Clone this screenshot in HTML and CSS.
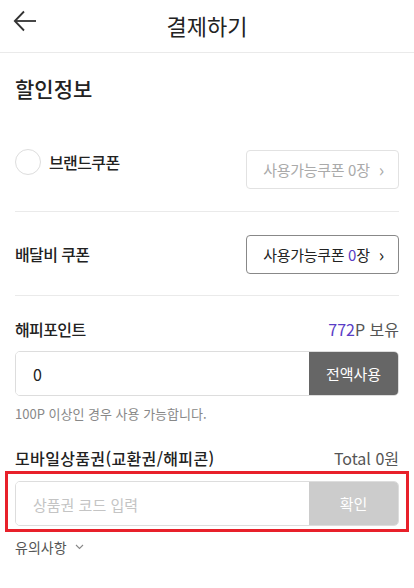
FILE: index.html
```html
<!DOCTYPE html>
<html lang="ko">
<head>
  <meta charset="UTF-8" />
  <meta name="viewport" content="width=device-width, initial-scale=1" />
  <title>결제하기</title>
  <link rel="stylesheet" href="styles.css">
</head>
<body>

<header class="topbar">
  <span class="back-btn">
    <svg width="24" height="22" viewBox="0 0 24 22" fill="none" stroke="#333" stroke-width="1.8">
      <path d="M23 11H2" />
      <path d="M11 1.5L1.8 11l9.2 9.5" />
    </svg>
  </span>
  <h1 class="title">결제하기</h1>
</header>

<main class="content">
  <h2 class="section-title">할인정보</h2>

  <div class="coupon-row brand">
    <label class="check">
      <span class="circle"></span>
      <span class="row-label">브랜드쿠폰</span>
    </label>
    <button class="coupon-btn disabled"><span>사용가능쿠폰 0장</span><span class="chev">&#8250;</span></button>
  </div>

  <div class="coupon-row delivery">
    <span class="row-label">배달비 쿠폰</span>
    <button class="coupon-btn"><span>사용가능쿠폰 <em class="hl">0</em>장</span><span class="chev">&#8250;</span></button>
  </div>

  <div class="point-block">
    <div class="field-head">
      <span class="row-label">해피포인트</span>
      <span class="meta"><em class="hl">772</em>P 보유</span>
    </div>
    <div class="input-group">
      <input class="field" type="text" value="0" />
      <button class="side-btn dark">전액사용</button>
    </div>
    <p class="note">100P 이상인 경우 사용 가능합니다.</p>
  </div>

  <div class="voucher-block">
    <div class="field-head">
      <span class="row-label wide">모바일상품권(교환권/해피콘)</span>
      <span class="meta">Total 0원</span>
    </div>
    <div class="highlight">
      <div class="input-group">
        <input class="field" type="text" placeholder="상품권 코드 입력" />
        <button class="side-btn light">확인</button>
      </div>
    </div>
    <div class="notice">유의사항
      <svg width="9" height="6" viewBox="0 0 9 6" fill="none" stroke="#888" stroke-width="1.1">
        <path d="M1 1l3.5 3.5L8 1" />
      </svg>
    </div>
  </div>
</main>

</body>
</html>
```

FILE: styles.css
```css
body {
  margin: 0;
  background: #fff;
  color: #222;
  font-family: "Noto Sans CJK KR", "Noto Sans", sans-serif;
}

/* Top bar */
.topbar {
  position: relative;
  height: 52px;
  border-bottom: 1px solid #eaeaea;
  display: flex;
  align-items: center;
  justify-content: center;
}

.back-btn {
  position: absolute;
  left: 13px;
  top: 10px;
  display: flex;
}

.title {
  margin: -3px 0 0;
  font-size: 22px;
  font-weight: 400;
  line-height: 28px;
  color: #222;
}

/* Content */
.content {
  padding: 0 15px;
}

.section-title {
  margin: 21px 0 0;
  font-size: 21px;
  font-weight: 500;
  line-height: 28px;
}

.row-label {
  font-size: 16px;
  font-weight: 500;
  line-height: 24px;
  letter-spacing: -0.6px;
}

.row-label.wide {
  letter-spacing: 0.35px;
}

.coupon-row {
  display: flex;
  justify-content: space-between;
  align-items: center;
  border-bottom: 1px solid #eaeaea;
}

.coupon-row.brand {
  align-items: flex-start;
  padding: 47px 0 22px;
}

.coupon-row.delivery {
  padding: 22px 0 21px;
}

.check {
  display: flex;
  align-items: center;
  gap: 8px;
}

.circle {
  width: 24px;
  height: 24px;
  border: 1px solid #ddd;
  border-radius: 50%;
}

.coupon-btn {
  width: 153px;
  height: 39px;
  margin-top: 1px;
  border: 1px solid #888;
  border-radius: 4px;
  background: #fff;
  font-family: inherit;
  font-size: 15px;
  letter-spacing: -0.3px;
  color: #222;
  display: flex;
  align-items: center;
  justify-content: center;
  padding: 0 0 0 2px;
}

.coupon-btn.disabled {
  border-color: #e2e2e2;
  color: #aaa;
}

.chev {
  font-size: 18px;
  line-height: 1;
  margin-left: 9px;
  margin-top: -2px;
}

.hl {
  font-style: normal;
  color: #5a3dc6;
}

/* Fields */
.field-head {
  display: flex;
  justify-content: space-between;
  align-items: center;
}

.meta {
  font-size: 16px;
  color: #555;
}

.point-block {
  padding-top: 21px;
}

.input-group {
  display: flex;
  height: 45px;
  border: 1px solid #ddd;
  border-radius: 5px;
  overflow: hidden;
  box-sizing: border-box;
}

.point-block .input-group {
  margin-top: 10px;
}

.field {
  flex: 1;
  min-width: 0;
  border: 0;
  outline: 0;
  padding: 0 0 0 17px;
  font-family: inherit;
  font-size: 16px;
  color: #222;
}

.field::placeholder {
  color: #c4c4c4;
  font-size: 15px;
}

.side-btn {
  width: 89px;
  border: 0;
  font-family: inherit;
  font-size: 15px;
  color: #fff;
}

.side-btn.dark {
  background: #666;
}

.side-btn.light {
  background: #ccc;
}

.note {
  margin: 8px 0 0;
  font-size: 13px;
  line-height: 20px;
  color: #888;
}

.voucher-block {
  padding-top: 22px;
}

.highlight {
  margin: 1px -10px 0;
  border: 3px solid #e8202a;
  padding: 7px 7px 3px;
}

.notice {
  margin-top: 5px;
  font-size: 14px;
  line-height: 20px;
  color: #555;
  display: flex;
  align-items: center;
  gap: 8px;
}
```
